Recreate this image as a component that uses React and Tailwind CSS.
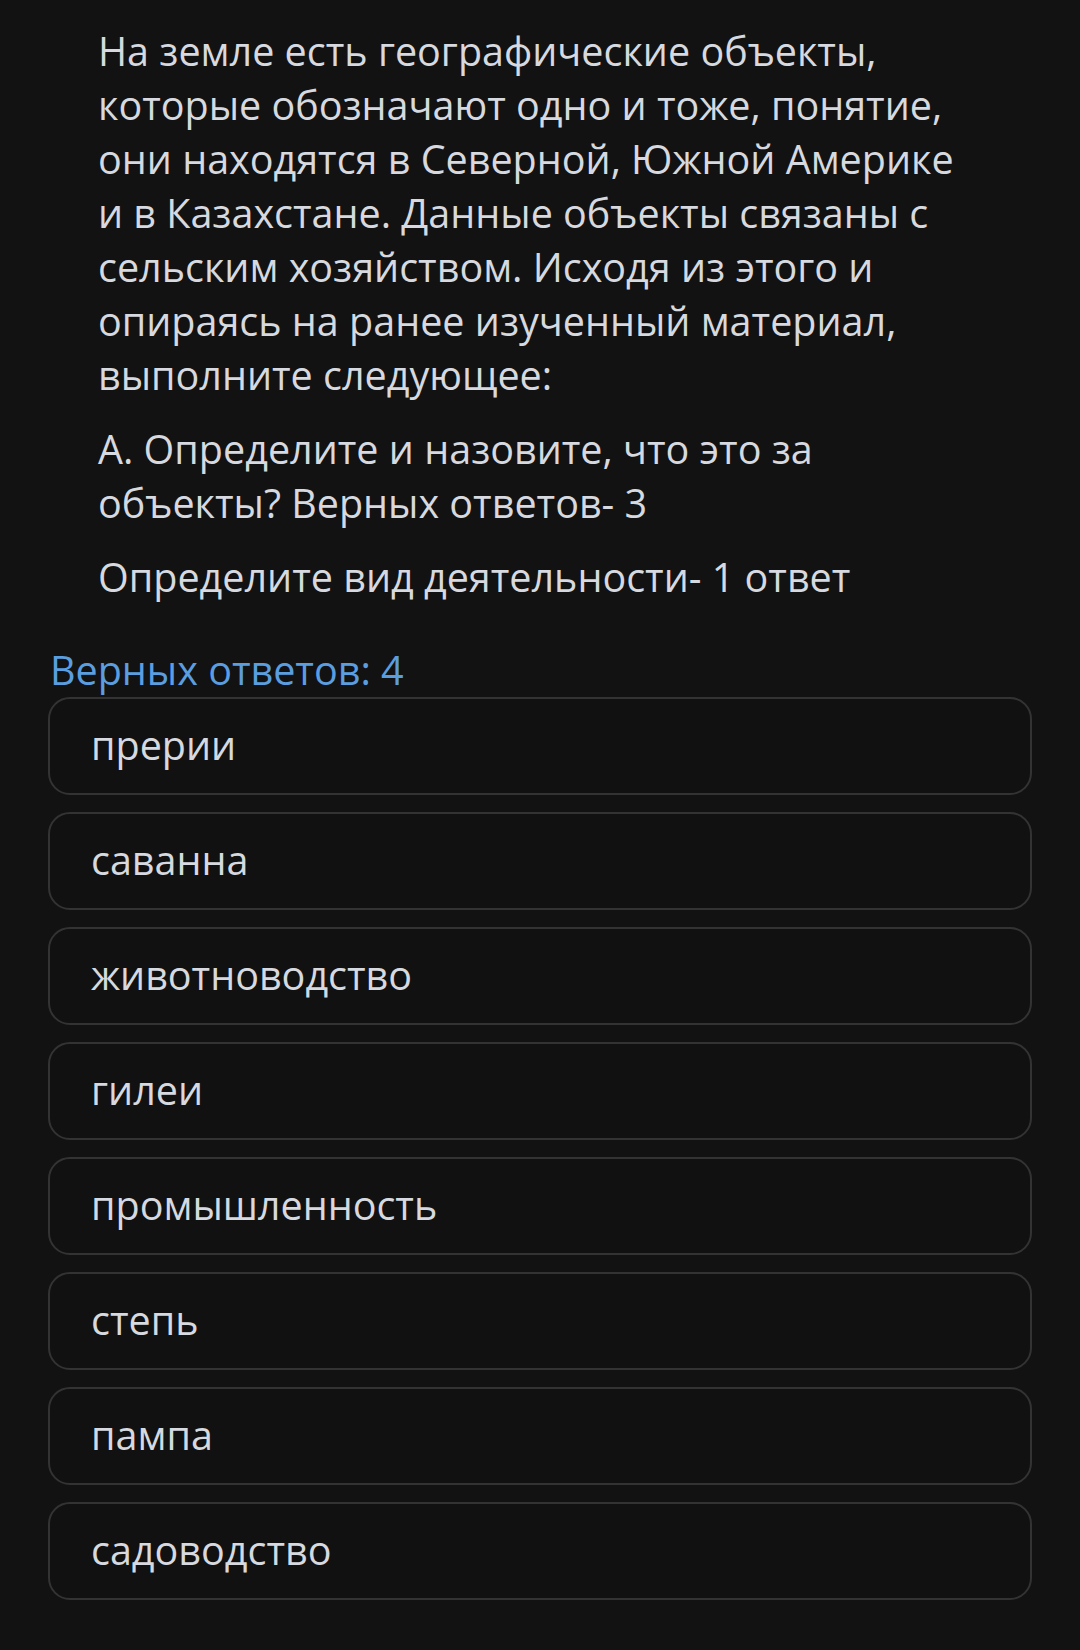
import React from 'react';

const options = [
    'прерии',
    'саванна',
    'животноводство',
    'гилеи',
    'промышленность',
    'степь',
    'пампа',
    'садоводство',
];

function App() {
    return (
        <div
            className="min-h-[1650px] w-[1080px] bg-[#121212] text-[#d6d9df]"
            style={{ fontFamily: '"Open Sans", "Noto Sans", sans-serif' }}
        >
            <div className="pt-[24px] pl-[98px] pr-[124px] text-[39.5px] leading-[54px] flex flex-col gap-[20px]">
                <p>
                    На земле есть географические объекты, которые обозначают одно и тоже, понятие, они находятся в Северной, Южной Америке и в Казахстане. Данные объекты связаны с сельским хозяйством. Исходя из этого и опираясь на ранее изученный материал, выполните следующее:
                </p>
                <p>А. Определите и назовите, что это за объекты? Верных ответов- 3</p>
                <p>Определите вид деятельности- 1 ответ</p>
            </div>

            <div className="px-[48px] mt-[39px]">
                <div className="text-[39.5px] leading-[54px] text-[#5b9ee0] pl-[2px]">Верных ответов: 4</div>
                <div className="flex flex-col gap-[17px]">
                    {options.map((item) => (
                        <div
                            key={item}
                            className="h-[98px] rounded-[22px] border-2 border-[#333333] bg-[#111111] flex items-center pl-[41px] text-[39.5px]"
                        >
                            {item}
                        </div>
                    ))}
                </div>
            </div>
        </div>
    );
}

export default App;
